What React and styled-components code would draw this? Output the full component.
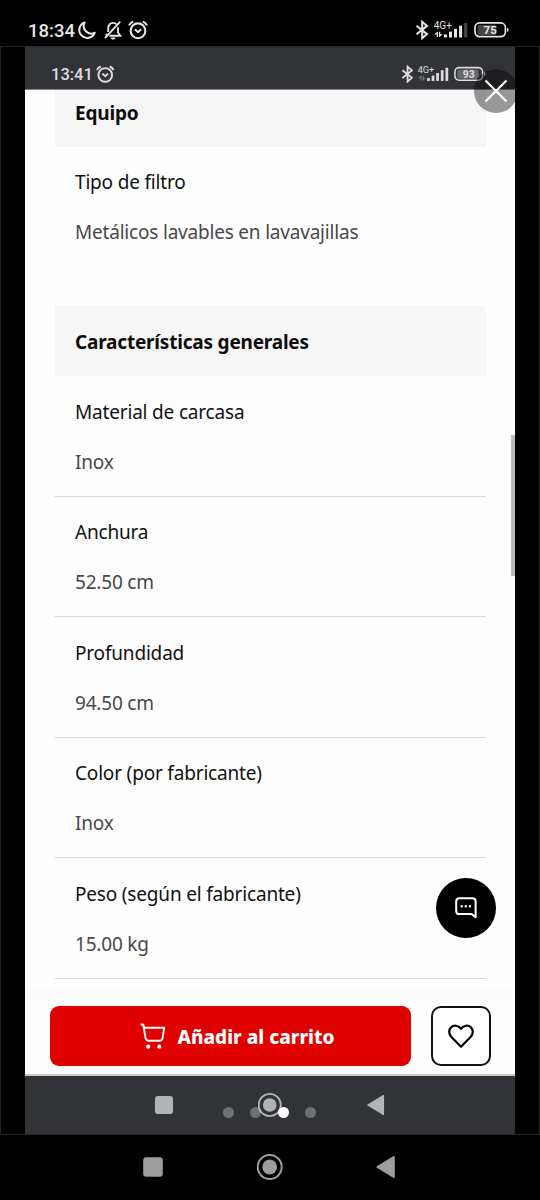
import React from "react";
import styled, { createGlobalStyle } from "styled-components";

const equipment = [
  { label: "Tipo de filtro", value: "Metálicos lavables en lavavajillas" },
];

const general = [
  { label: "Material de carcasa", value: "Inox" },
  { label: "Anchura", value: "52.50 cm" },
  { label: "Profundidad", value: "94.50 cm" },
  { label: "Color (por fabricante)", value: "Inox" },
  { label: "Peso (según el fabricante)", value: "15.00 kg" },
];

const MoonIcon = () => (
  <Icon width="20" height="20" viewBox="0 0 20 20">
    <path
      d="M7.600 2.400A8 8 0 1 0 17.800 12.700 A7.600 7.600 0 0 1 7.600 2.400Z"
      fill="none"
      stroke="currentColor"
      strokeWidth="2"
      strokeLinejoin="round"
    />
  </Icon>
);

const BellOffIcon = () => (
  <Icon width="20" height="20" viewBox="0 0 20 20">
    <g fill="none" stroke="currentColor" strokeWidth="1.9">
      <path d="M5.2 12V8.3C5.2 5 7.2 2.9 10 2.9c1.6 0 2.8.6 3.6 1.6M15 7.2v5.3l2.3 3.2H6.5" />
      <path d="M4.2 13.7l-1.4 2M2 18.2L17.2 1.6" />
    </g>
    <path d="M7.5 17.6h5.2c-.5 1.4-1.4 2-2.6 2s-2.1-.6-2.6-2z" fill="currentColor" />
  </Icon>
);

const AlarmIcon = ({ size }) => (
  <Icon width={size} height={size} viewBox="0 0 20 20">
    <g fill="none" stroke="currentColor">
      <circle cx="10" cy="10.8" r="7.4" strokeWidth="2.1" />
      <path d="M1 5.4Q2.3 2.8 5.2 1.6M19 5.4Q17.7 2.8 14.8 1.6" strokeWidth="2.1" />
      <path d="M6.9 9.3L10 12.2l3.1-2.9" strokeWidth="2" />
    </g>
  </Icon>
);

const BluetoothIcon = ({ scale }) => (
  <Icon width={14 * scale} height={20 * scale} viewBox="0 0 14 20">
    <path
      d="M1.5 5.7L12 14.1 7.2 18.2V1.8L12 5.9 1.5 14.3"
      fill="none"
      stroke="currentColor"
      strokeWidth="2"
    />
  </Icon>
);

const SignalIcon = ({ scale, dimLast, dimArrows }) => (
  <Icon width={34 * scale} height={20 * scale} viewBox="0 0 34 20">
    <SignalText x="-0.3" y="9.200">
      4G+
    </SignalText>
    <g fill="currentColor" opacity={dimArrows ? 0.4 : 1}>
      <path d="M2.800 17V14.500H0L3.300 11.800H4V17z" />
      <path d="M5 11.800v5.200h.7L8.500 14H6.300v-2.200z" />
    </g>
    <g fill="currentColor">
      <rect x="10" y="14.4" width="3" height="3.1" />
      <rect x="15" y="11.6" width="3" height="5.9" />
      <rect x="20" y="8.8" width="3" height="8.7" />
      <rect x="25.1" y="5.7" width="3" height="11.8" />
      <rect x="30.2" y="3" width="3" height="14.5" opacity={dimLast ? 0.3 : 1} />
    </g>
  </Icon>
);

const BatteryIcon = ({ scale, level }) => (
  <Icon width={36 * scale} height={20 * scale} viewBox="0 0 36 20">
    <rect x="3.6" y="5" width={(25 * level) / 100} height="10" rx="2" fill="#fff" opacity="0.27" />
    <rect
      x="1"
      y="2.9"
      width="30.4"
      height="13.8"
      rx="4.6"
      fill="none"
      stroke="currentColor"
      strokeWidth="1.7"
    />
    <path d="M33 7.7q1.7.4 1.7 2.1t-1.7 2.1z" fill="currentColor" />
    <BatteryText x="16.2" y="13.9" textAnchor="middle">
      {level}
    </BatteryText>
  </Icon>
);

const CloseIcon = () => (
  <Icon width="24" height="24" viewBox="0 0 24 24">
    <path d="M1.500 1.500l21 21M22.500 1.500l-21 21" stroke="#fff" strokeWidth="2.200" />
  </Icon>
);

const ChatIcon = () => (
  <Icon width="22" height="22" viewBox="0 0 22 22">
    <path
      d="M4.4 1.2h13c2 0 3.2 1.2 3.2 3.2v15.8l-3.9-3.1H4.4c-2 0-3.2-1.2-3.2-3.2V4.4c0-2 1.2-3.2 3.2-3.2z"
      fill="none"
      stroke="#fff"
      strokeWidth="2"
      strokeLinejoin="round"
    />
    <g fill="#fff">
      <rect x="5.6" y="8.2" width="2.2" height="2.2" />
      <rect x="9.7" y="8.2" width="2.2" height="2.2" />
      <rect x="13.8" y="8.2" width="2.2" height="2.2" />
    </g>
  </Icon>
);

const CartIcon = () => (
  <Icon width="26" height="27" viewBox="0 0 26 27">
    <path
      d="M.5 1.500h2.700l1 3.200h20L22.600 14.800c-.3 2-1.600 3-3.300 3H9c-1.900 0-3-.9-3.400-2.700L3.200 1.500"
      fill="none"
      stroke="#fff"
      strokeWidth="1.9"
      strokeLinejoin="round"
    />
    <circle cx="8.2" cy="23.7" r="2.1" fill="#fff" />
    <circle cx="19.3" cy="23.7" r="2.1" fill="#fff" />
  </Icon>
);

const HeartIcon = () => (
  <Icon width="26" height="24" viewBox="0 0 26 24">
    <path
      d="M13 22.700L3.200 12.800C.6 10 .6 5.800 3 3.400C5.800.8 10.200 1.200 13 4.800C15.800 1.200 20.200.8 23 3.400C25.400 5.800 25.400 10 22.800 12.800Z"
      fill="none"
      stroke="#000"
      strokeWidth="2.2"
      strokeLinejoin="round"
    />
  </Icon>
);

const NavButtons = ({ size }) => (
  <>
    <Icon width={size} height={size} viewBox="0 0 26 26">
      <rect x="3.2" y="3.2" width="19.6" height="19.6" rx="3.2" fill="currentColor" />
    </Icon>
    <Icon width={size} height={size} viewBox="0 0 26 26">
      <circle cx="12.700" cy="13" r="12" fill="none" stroke="currentColor" strokeWidth="2" />
      <circle cx="12.700" cy="13" r="7.4" fill="currentColor" />
    </Icon>
    <Icon width={size} height={size} viewBox="0 0 26 26">
      <path
        d="M4.2 13L21 2.7V23.3Z"
        fill="currentColor"
        stroke="currentColor"
        strokeWidth="1.5"
        strokeLinejoin="round"
      />
    </Icon>
  </>
);

const Spec = ({ label, value, last }) => (
  <Row $last={last}>
    <Label>{label}</Label>
    <Value>{value}</Value>
  </Row>
);

function App() {
  return (
    <Phone>
      <GlobalStyle />
      <StatusBar>
        <Clock>18:34</Clock>
        <Notifications>
          <MoonIcon />
          <BellOffIcon />
          <AlarmIcon size={20} />
        </Notifications>
        <System>
          <BluetoothIcon scale={1} />
          <SignalIcon scale={1} dimLast />
          <BatteryIcon scale={1} level={75} />
        </System>
      </StatusBar>
      <Viewer>
        <Screenshot>
          <InnerStatusBar>
            <InnerClock>13:41</InnerClock>
            <AlarmIcon size={18.5} />
            <InnerSystem>
              <BluetoothIcon scale={0.91} />
              <SignalIcon scale={0.91} dimArrows />
              <BatteryIcon scale={0.91} level={93} />
            </InnerSystem>
          </InnerStatusBar>
          <Specs>
            <SectionTitle $clipped>Equipo</SectionTitle>
            <Section>
              {equipment.map((item) => (
                <Spec key={item.label} {...item} last />
              ))}
            </Section>
            <SectionTitle>Características generales</SectionTitle>
            {general.map((item) => (
              <Spec key={item.label} {...item} />
            ))}
            <ScrollThumb />
            <ChatButton aria-label="Chat">
              <ChatIcon />
            </ChatButton>
          </Specs>
          <BuyBar>
            <AddButton>
              <CartIcon />
              <AddLabel>Añadir al carrito</AddLabel>
            </AddButton>
            <WishButton aria-label="Favoritos">
              <HeartIcon />
            </WishButton>
          </BuyBar>
          <InnerNav>
            <NavButtons size={24} />
          </InnerNav>
        </Screenshot>
        <CloseButton aria-label="Cerrar">
          <CloseIcon />
        </CloseButton>
        <Pager>
          <Dot />
          <Dot />
          <Dot $active />
          <Dot />
        </Pager>
      </Viewer>
      <SystemNav>
        <NavButtons size={26} />
      </SystemNav>
    </Phone>
  );
}

const GlobalStyle = createGlobalStyle`
  * {
    box-sizing: border-box;
  }
  body {
    margin: 0;
    background: #000;
  }
`;

const Icon = styled.svg`
  display: block;
  flex: none;
`;

const SignalText = styled.text`
  font: 400 10px Roboto, sans-serif;
  fill: currentColor;
`;

const BatteryText = styled.text`
  font: 700 11.5px Roboto, sans-serif;
  fill: currentColor;
`;

const Phone = styled.div`
  width: 540px;
  height: 1200px;
  display: flex;
  flex-direction: column;
  overflow: hidden;
  background: #000;
  font-family: "Noto Sans", sans-serif;
`;

const StatusBar = styled.header`
  height: 46px;
  display: flex;
  align-items: center;
  padding: 14px 30.5px 0 28px;
  color: #e6e6e6;
`;

const Clock = styled.span`
  width: 49px;
  font: 500 18.5px/20px Roboto, sans-serif;
  padding-top: 1px;
`;

const Notifications = styled.div`
  display: flex;
  gap: 5.5px;
`;

const System = styled.div`
  display: flex;
  gap: 5.5px;
  margin-left: auto;
`;

const Viewer = styled.main`
  position: relative;
  height: 1089px;
  padding: 0 24px;
  border: 1px solid #262626;
`;

const Screenshot = styled.section`
  width: 490px;
  height: 1087px;
  display: flex;
  flex-direction: column;
  overflow: hidden;
  background: #fefefe;
`;

const InnerStatusBar = styled.div`
  height: 43px;
  flex: none;
  display: flex;
  align-items: center;
  padding: 12px 28.5px 0 26px;
  background: #323336;
  border-bottom: 1px solid #85868a;
  color: #dedee0;
`;

const InnerClock = styled.span`
  width: 45px;
  font: 500 16.5px/18px Roboto, sans-serif;
  padding-top: 1px;
`;

const InnerSystem = styled.div`
  display: flex;
  gap: 4.5px;
  margin-left: auto;
`;

const Specs = styled.div`
  position: relative;
  height: 900px;
  flex: none;
  padding: 0 29px 0 30px;
`;

const SectionTitle = styled.h2`
  height: ${(props) => (props.$clipped ? "56.5px" : "70px")};
  margin: 0;
  padding: ${(props) => (props.$clipped ? "8px 20px 0" : "21px 20px 0")};
  background: #f6f6f6;
  color: #0c0c0c;
  font-size: 19px;
  font-weight: 700;
  line-height: 30px;
  letter-spacing: -0.2px;
`;

const Section = styled.div`
  padding-bottom: 39px;
`;

const Row = styled.div`
  height: 120.5px;
  display: flex;
  flex-direction: column;
  gap: 20px;
  padding: 20.5px 20px 0;
  border-bottom: 1px solid ${(props) => (props.$last ? "transparent" : "#d8d8d8")};
`;

const Label = styled.span`
  color: #111;
  font-size: 19px;
  line-height: 30px;
  letter-spacing: -0.18px;
`;

const Value = styled.span`
  color: #484848;
  font-size: 19px;
  line-height: 30px;
  letter-spacing: -0.2px;
`;

const ScrollThumb = styled.div`
  position: absolute;
  top: 345px;
  right: 0;
  width: 4.5px;
  height: 141px;
  background: #bdbdbd;
`;

const ChatButton = styled.button`
  position: absolute;
  top: 788px;
  right: 19.5px;
  width: 60px;
  height: 60px;
  display: flex;
  align-items: center;
  justify-content: center;
  padding: 0;
  border: none;
  border-radius: 50%;
  background: #000;
`;

const BuyBar = styled.div`
  flex: 1;
  display: flex;
  gap: 20px;
  padding: 16px 24px 0 25px;
  border-bottom: 2px solid #c9cac4;
  background: linear-gradient(#fbfbfb, #fefefe 12px);
`;

const AddButton = styled.button`
  width: 361px;
  height: 60px;
  display: flex;
  align-items: center;
  justify-content: center;
  gap: 12px;
  padding: 0 0 0 13px;
  border: none;
  border-radius: 9px;
  background: #e00000;
  color: #fff;
`;

const AddLabel = styled.span`
  font-family: "Noto Sans", sans-serif;
  font-size: 19px;
  font-weight: 800;
  line-height: 30px;
  padding-top: 1px;
`;

const WishButton = styled.button`
  width: 60px;
  height: 60px;
  display: flex;
  align-items: center;
  justify-content: center;
  padding: 0;
  border: 2px solid #111;
  border-radius: 10px;
  background: #fff;
`;

const InnerNav = styled.div`
  height: 58px;
  flex: none;
  display: flex;
  justify-content: space-between;
  padding: 17px 127px 0;
  background: #323336;
  color: #b2b3b7;
`;

const CloseButton = styled.button`
  position: absolute;
  top: 22px;
  right: 21.5px;
  width: 44px;
  height: 44px;
  display: flex;
  align-items: center;
  justify-content: center;
  padding: 0;
  border: none;
  border-radius: 50%;
  background: rgba(0, 0, 0, 0.4);
`;

const Pager = styled.div`
  position: absolute;
  bottom: 16px;
  left: 221.5px;
  display: flex;
  gap: 16.5px;
`;

const Dot = styled.span`
  width: 11px;
  height: 11px;
  border-radius: 50%;
  background: ${(props) => (props.$active ? "#fff" : "rgba(255, 255, 255, 0.3)")};
`;

const SystemNav = styled.nav`
  height: 65px;
  display: flex;
  justify-content: space-between;
  padding: 19px 141px 0 140px;
  color: #9d9d9d;
`;

export default App;
